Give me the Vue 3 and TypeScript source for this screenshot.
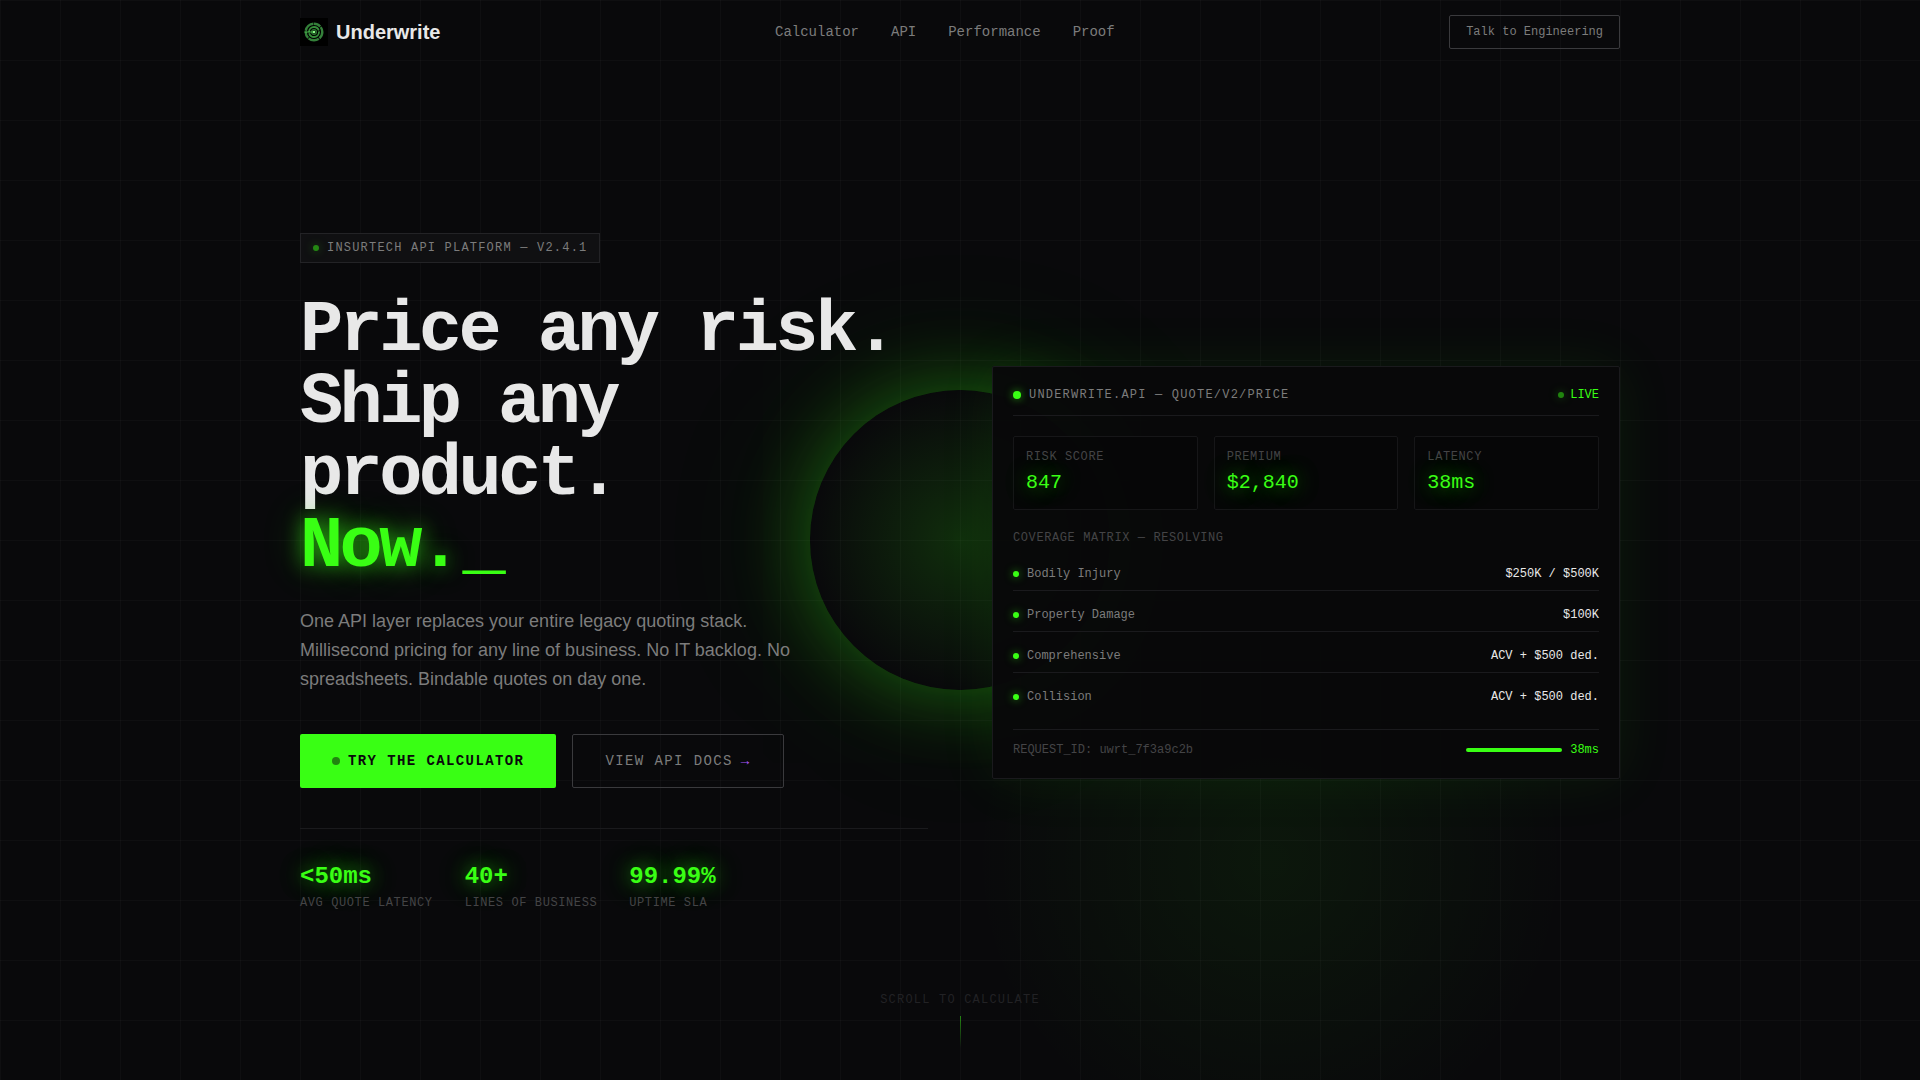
<script setup lang="ts">
interface Item {
  label: string
  value: string
}

const links: string[] = ['Calculator', 'API', 'Performance', 'Proof']

const stats: Item[] = [
  { value: '<50ms', label: 'AVG QUOTE LATENCY' },
  { value: '40+', label: 'LINES OF BUSINESS' },
  { value: '99.99%', label: 'UPTIME SLA' },
]

const metrics: Item[] = [
  { label: 'RISK SCORE', value: '847' },
  { label: 'PREMIUM', value: '$2,840' },
  { label: 'LATENCY', value: '38ms' },
]

const coverages: Item[] = [
  { label: 'Bodily Injury', value: '$250K / $500K' },
  { label: 'Property Damage', value: '$100K' },
  { label: 'Comprehensive', value: 'ACV + $500 ded.' },
  { label: 'Collision', value: 'ACV + $500 ded.' },
]
</script>

<template>
  <div class="page">
    <div class="backdrop" aria-hidden="true">
      <div class="haze"></div>
      <div class="orb"></div>
    </div>

    <header class="nav wrap">
      <a class="brand" href="#">
        <svg class="logo" viewBox="0 0 28 28" fill="none" aria-hidden="true">
          <rect width="28" height="28" fill="#000" />
          <circle cx="14" cy="14" r="8.3" stroke="#34803a" stroke-width="2.4" stroke-dasharray="7 .8 11 .6" />
          <circle cx="14" cy="14" r="5" stroke="#36903b" stroke-width="1.8" stroke-dasharray="14 1" />
          <circle cx="14" cy="14" r="2.4" stroke="#2c7831" stroke-width="1.2" />
          <path d="M4.5 14h9" stroke="#4ac04e" stroke-width="1" />
          <circle cx="14" cy="14" r="1.3" fill="#8dff8a" />
        </svg>
        <span class="brand-name">Underwrite</span>
      </a>
      <nav class="links" aria-label="Main">
        <a v-for="link in links" :key="link" href="#">{{ link }}</a>
      </nav>
      <button class="talk" type="button">Talk to Engineering</button>
    </header>

    <main class="hero wrap">
      <section class="intro">
        <p class="badge"><span class="dot dim"></span>INSURTECH API PLATFORM — V2.4.1</p>
        <h1 class="title">
          Price any risk.<br />Ship any product.<br />
          <span class="now">Now.</span><span class="cursor">_</span>
        </h1>
        <p class="lead">
          One API layer replaces your entire legacy quoting stack. Millisecond pricing for any line of
          business. No IT backlog. No spreadsheets. Bindable quotes on day one.
        </p>
        <div class="actions">
          <button class="btn primary" type="button"><span class="btn-dot"></span>TRY THE CALCULATOR</button>
          <button class="btn secondary" type="button">VIEW API DOCS<span class="arrow">→</span></button>
        </div>
        <dl class="stats">
          <div v-for="stat in stats" :key="stat.label" class="stat">
            <dt>{{ stat.label }}</dt>
            <dd>{{ stat.value }}</dd>
          </div>
        </dl>
      </section>

      <section class="panel" aria-label="Live quote">
        <div class="panel-head">
          <h2 class="endpoint"><span class="dot large"></span>UNDERWRITE.API — QUOTE/V2/PRICE</h2>
          <span class="live"><span class="dot dim"></span>LIVE</span>
        </div>
        <dl class="metrics">
          <div v-for="metric in metrics" :key="metric.label" class="metric">
            <dt>{{ metric.label }}</dt>
            <dd>{{ metric.value }}</dd>
          </div>
        </dl>
        <h3 class="matrix-title">COVERAGE MATRIX — RESOLVING</h3>
        <dl class="matrix">
          <div v-for="row in coverages" :key="row.label" class="coverage">
            <dt><span class="dot"></span>{{ row.label }}</dt>
            <dd>{{ row.value }}</dd>
          </div>
        </dl>
        <div class="panel-foot">
          <span>REQUEST_ID: uwrt_7f3a9c2b</span>
          <span class="timing"><span class="bar"></span>38ms</span>
        </div>
      </section>
    </main>

    <div class="scroll-cue">
      <span>SCROLL TO CALCULATE</span>
      <span class="scroll-line"></span>
    </div>
  </div>
</template>

<style>
body {
  margin: 0;
  background: #09090b;
}
</style>

<style scoped>
.page {
  --green: #39ff14;
  --text: #e8e8e8;
  --muted: #7c7c7c;
  --faint: #444446;
  --line: #1a1a1d;
  --sans: "Liberation Sans", Arial, sans-serif;
  --mono: "Liberation Mono", "Courier New", monospace;
  position: relative;
  isolation: isolate;
  display: flex;
  flex-direction: column;
  min-height: 100vh;
  overflow: hidden;
  background: #09090b;
  color: var(--text);
  font-family: var(--mono);
  font-size: 12px;
  line-height: 16px;
}

.page *,
.page *::before {
  box-sizing: border-box;
}

h1, h2, h3, p, dl, dd {
  margin: 0;
  font-weight: 400;
  font-size: inherit;
}

a {
  color: inherit;
  text-decoration: none;
}

button {
  margin: 0;
  border: 0;
  background: none;
  font-family: inherit;
  cursor: pointer;
}

/* Decorative light and grid behind the content */
.backdrop {
  position: absolute;
  inset: 0;
  z-index: -1;
}

.backdrop::before {
  content: "";
  position: absolute;
  inset: 0;
  background-image:
    linear-gradient(rgba(255, 255, 255, 0.025) 1px, transparent 1px),
    linear-gradient(90deg, rgba(255, 255, 255, 0.025) 1px, transparent 1px);
  background-size: 60px 60px;
}

.haze {
  position: absolute;
  right: 350px;
  bottom: -80px;
  width: 600px;
  height: 600px;
  border-radius: 50%;
  background: radial-gradient(circle, rgba(57, 255, 20, 0.06), transparent 70%);
}

.orb {
  position: absolute;
  top: 50%;
  left: 50%;
  width: 300px;
  height: 300px;
  margin: -150px 0 0 -150px;
  border-radius: 50%;
  background: radial-gradient(circle, rgba(57, 255, 20, 0.15), transparent 70%);
  box-shadow:
    0 0 80px rgba(57, 255, 20, 0.3),
    0 0 160px rgba(57, 255, 20, 0.15);
}

.wrap {
  width: 100%;
  max-width: 1400px;
  margin: 0 auto;
  padding: 0 40px;
}

.nav {
  display: flex;
  align-items: center;
  justify-content: space-between;
  height: 64px;
}

.brand {
  display: flex;
  align-items: center;
  gap: 8px;
}

.logo {
  width: 28px;
  height: 28px;
}

.brand-name {
  font: 700 20px/28px var(--sans);
}

.links {
  display: flex;
  gap: 32px;
  color: var(--muted);
  font-size: 14px;
}

.talk {
  padding: 8px 16px;
  border: 1px solid #3a3a3d;
  border-radius: 2px;
  color: var(--muted);
  font-size: 12px;
  line-height: 16px;
}

.hero {
  flex: 1;
  display: grid;
  grid-template-columns: 1fr 1fr;
  gap: 64px;
  align-items: center;
}

.dot {
  flex: none;
  width: 6px;
  height: 6px;
  border-radius: 50%;
  background: var(--green);
  box-shadow: 0 0 8px rgba(57, 255, 20, 0.6);
}

.dot.large {
  width: 8px;
  height: 8px;
}

.dot.dim {
  opacity: 0.5;
}

.badge {
  display: inline-flex;
  align-items: center;
  gap: 8px;
  padding: 6px 12px;
  border: 1px solid #232326;
  background: #101012;
  color: var(--muted);
  letter-spacing: 0.1em;
}

.title {
  margin-top: 32px;
  font-weight: 700;
  font-size: 72px;
  line-height: 72px;
  letter-spacing: -0.05em;
}

.now {
  color: var(--green);
  text-shadow:
    0 0 20px rgba(57, 255, 20, 0.6),
    0 0 40px rgba(57, 255, 20, 0.3);
}

.cursor {
  margin-left: 4px;
  color: var(--green);
}

.lead {
  max-width: 520px;
  margin-top: 24px;
  color: var(--muted);
  font: 18px/29px var(--sans);
}

.actions {
  display: flex;
  gap: 16px;
  margin-top: 40px;
}

.btn {
  display: flex;
  align-items: center;
  gap: 8px;
  padding: 0 32px;
  height: 54px;
  border-radius: 2px;
  font-size: 14px;
  letter-spacing: 0.1em;
}

.primary {
  background: var(--green);
  color: #09090b;
  font-weight: 700;
}

.btn-dot {
  width: 8px;
  height: 8px;
  border-radius: 50%;
  background: #09090b;
  opacity: 0.5;
}

.secondary {
  border: 1px solid #3a3a3d;
  color: var(--muted);
}

.arrow {
  color: #a855f7;
}

.stats {
  display: flex;
  gap: 32px;
  margin-top: 40px;
  padding-top: 32px;
  border-top: 1px solid var(--line);
}

.stat {
  display: flex;
  flex-direction: column-reverse;
  gap: 2px;
}

.stat dt,
.metric dt,
.matrix-title {
  color: var(--faint);
  letter-spacing: 0.05em;
}

.stat dd {
  color: var(--green);
  font-weight: 700;
  font-size: 24px;
  line-height: 32px;
  text-shadow:
    0 0 20px rgba(57, 255, 20, 0.6),
    0 0 40px rgba(57, 255, 20, 0.3);
}

.panel {
  padding: 20px;
  border: 1px solid var(--line);
  border-radius: 2px;
  background: rgba(8, 8, 10, 0.95);
  box-shadow: 0 0 60px rgba(57, 255, 20, 0.08);
}

.panel-head {
  display: flex;
  align-items: center;
  justify-content: space-between;
  padding-bottom: 12px;
  border-bottom: 1px solid var(--line);
}

.endpoint {
  display: flex;
  align-items: center;
  gap: 8px;
  color: var(--muted);
  letter-spacing: 0.1em;
}

.live {
  display: flex;
  align-items: center;
  gap: 6px;
  color: var(--green);
}

.metrics {
  display: grid;
  grid-template-columns: repeat(3, 1fr);
  gap: 16px;
  margin: 20px 0;
}

.metric {
  padding: 12px;
  border: 1px solid #161618;
  border-radius: 2px;
  background: rgba(4, 4, 6, 0.5);
}

.metric dd {
  margin-top: 4px;
  color: var(--green);
  font-size: 20px;
  line-height: 28px;
  text-shadow:
    0 0 20px rgba(57, 255, 20, 0.6),
    0 0 40px rgba(57, 255, 20, 0.3);
}

.matrix {
  display: flex;
  flex-direction: column;
  gap: 8px;
  margin-top: 12px;
}

.coverage {
  display: flex;
  justify-content: space-between;
  padding: 8px 0;
  border-bottom: 1px solid var(--line);
}

.coverage:last-child {
  border-bottom: 0;
}

.coverage dt {
  display: flex;
  align-items: center;
  gap: 8px;
  color: var(--muted);
}

.panel-foot {
  display: flex;
  justify-content: space-between;
  margin-top: 16px;
  padding-top: 12px;
  border-top: 1px solid var(--line);
  color: var(--faint);
}

.timing {
  display: flex;
  align-items: center;
  gap: 8px;
  color: var(--green);
}

.bar {
  width: 96px;
  height: 4px;
  border-radius: 2px;
  background: var(--green);
}

.scroll-cue {
  position: absolute;
  bottom: 32px;
  left: 0;
  right: 0;
  display: flex;
  flex-direction: column;
  align-items: center;
  gap: 8px;
  color: #222225;
  letter-spacing: 0.1em;
}

.scroll-line {
  width: 1px;
  height: 32px;
  background: linear-gradient(rgba(57, 255, 20, 0.5), transparent);
}
</style>
